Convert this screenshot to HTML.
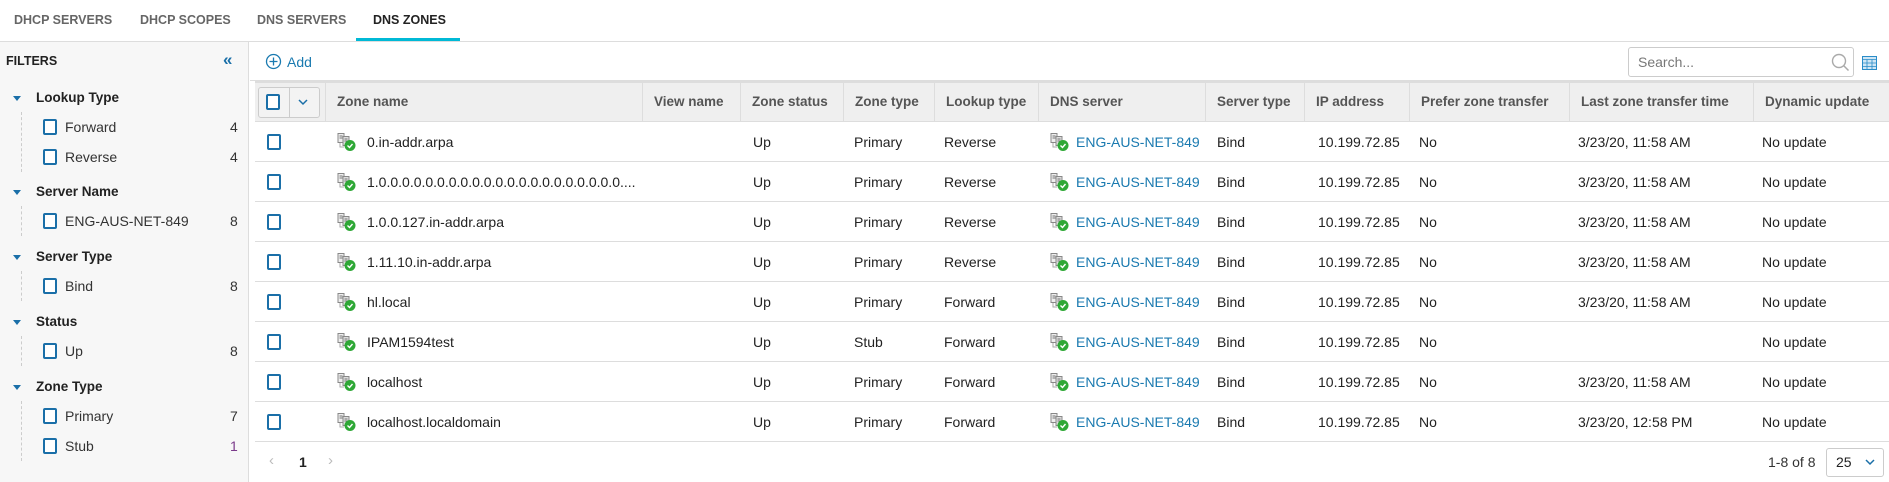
<!DOCTYPE html>
<html><head><meta charset="utf-8"><style>
*{box-sizing:border-box;margin:0;padding:0}
body{width:1889px;height:482px;overflow:hidden;background:#fff;font-family:"Liberation Sans",sans-serif;font-size:14px;color:#222;position:relative}
.abs{position:absolute}
.tabs{left:0;top:0;width:1889px;height:42px;border-bottom:1px solid #ddd}
.tab{position:absolute;top:13px;font-size:12.5px;font-weight:bold;color:#666}
.side{left:0;top:42px;width:249px;height:440px;background:#f7f7f7;border-right:1px solid #ddd}
.cb{position:absolute;width:14px;height:16px;border:2px solid #1a6fa8;border-radius:2px;background:#fff}
.grp{position:absolute;left:36px;font-weight:bold;font-size:13.5px;color:#222}
.tri{position:absolute;left:13px;width:0;height:0;border-left:4px solid transparent;border-right:4px solid transparent;border-top:5px solid #1a6fa8}
.item{position:absolute;color:#333}
.cnt{position:absolute;color:#333}
.vline{position:absolute;left:21px;border-left:1px dashed #ccc}
.hdr{left:255px;top:81px;width:1634px;height:41px;background:#efefef;border-top:2px solid #ddd;border-bottom:1px solid #ddd}
.th{position:absolute;top:0;height:39px;line-height:38px;padding-left:11px;font-weight:bold;color:#555;border-left:1px solid #ddd;white-space:nowrap;font-size:13.5px}
.row{position:absolute;left:255px;width:1634px;height:40px;border-bottom:1px solid #ddd}
.td{position:absolute;top:0;line-height:40px;white-space:nowrap;color:#222}
.lnk{color:#1a7ab0}
.ico{position:absolute;top:11px}
</style></head><body>
<div class="abs tabs">
<span class="tab" style="left:14px">DHCP SERVERS</span>
<span class="tab" style="left:140px">DHCP SCOPES</span>
<span class="tab" style="left:257px">DNS SERVERS</span>
<span class="tab" style="left:373px;color:#222">DNS ZONES</span>
<div class="abs" style="left:356px;top:38px;width:104px;height:3px;background:#00b9d6"></div>
</div>
<div class="abs side">
<div class="abs" style="left:6px;top:12px;font-weight:bold;font-size:12.5px">FILTERS</div>
<div class="abs" style="left:223px;top:8px;color:#1a6fa8;font-size:17px;font-weight:bold">«</div>
</div>
<div id="filters"></div>
<div class="abs" style="left:250px;top:80px;width:1639px;height:1px;background:#ddd"></div>
<svg class="abs" style="left:265px;top:53px" width="17" height="17"><circle cx="8.5" cy="8.5" r="7" fill="none" stroke="#1a7ab0" stroke-width="1.3"/><path d="M8.5 4.5v8M4.5 8.5h8" stroke="#1a7ab0" stroke-width="1.3"/></svg>
<div class="abs" style="left:287px;top:54px;color:#1a7ab0;font-size:14px">Add</div>
<div class="abs" style="left:1628px;top:47px;width:226px;height:30px;border:1px solid #ccc;border-radius:3px"></div>
<div class="abs" style="left:1638px;top:54px;color:#777">Search...</div>
<svg class="abs" style="left:1831px;top:53px" width="19" height="19"><circle cx="8" cy="8" r="6.5" fill="none" stroke="#aaa" stroke-width="1.4"/><path d="M12.5 12.5l5 5" stroke="#aaa" stroke-width="1.5"/></svg>
<svg class="abs" style="left:1862px;top:56px" width="15" height="14"><rect x="0.5" y="0.5" width="14" height="13" fill="#cfe6f5" stroke="#2a8cc8"/><path d="M0.5 3.5h14M5 3.5v10M10 3.5v10M0.5 7h14M0.5 10.5h14" stroke="#2a8cc8" stroke-width="0.8"/></svg>
<div class="abs hdr">
<div class="abs" style="left:3px;top:4px;width:62px;height:31px;border:1px solid #ccc;border-radius:3px;background:#f3f3f3"></div>
<div class="cb" style="left:11px;top:11px"></div>
<div class="abs" style="left:34px;top:5px;width:1px;height:29px;background:#ccc"></div>
<svg class="abs" style="left:43px;top:16px" width="10" height="7"><path d="M1 1l4 4 4-4" fill="none" stroke="#1a6fa8" stroke-width="1.5"/></svg>
<div class="th" style="left:70px">Zone name</div>
<div class="th" style="left:387px">View name</div>
<div class="th" style="left:485px">Zone status</div>
<div class="th" style="left:588px">Zone type</div>
<div class="th" style="left:679px">Lookup type</div>
<div class="th" style="left:783px">DNS server</div>
<div class="th" style="left:950px">Server type</div>
<div class="th" style="left:1049px">IP address</div>
<div class="th" style="left:1154px">Prefer zone transfer</div>
<div class="th" style="left:1314px">Last zone transfer time</div>
<div class="th" style="left:1498px">Dynamic update</div>
</div>
<div id="rows"></div>
<div class="abs" style="left:269px;top:452px;color:#bbb;font-size:15px">‹</div>
<div class="abs" style="left:299px;top:454px;font-weight:bold;color:#222">1</div>
<div class="abs" style="left:328px;top:452px;color:#bbb;font-size:15px">›</div>
<div class="abs" style="left:1768px;top:454px;color:#333">1-8 of 8</div>
<div class="abs" style="left:1826px;top:448px;width:58px;height:29px;border:1px solid #ccc;border-radius:3px"></div>
<div class="abs" style="left:1836px;top:454px;color:#222">25</div>
<svg class="abs" style="left:1865px;top:459px" width="10" height="7"><path d="M1 1l4 4 4-4" fill="none" stroke="#1a6fa8" stroke-width="1.5"/></svg>
<script>
var f=[["Lookup Type",98,[["Forward",4],["Reverse",4]]],["Server Name",192,[["ENG-AUS-NET-849",8]]],["Server Type",257,[["Bind",8]]],["Status",322,[["Up",8]]],["Zone Type",387,[["Primary",7],["Stub",1]]]];
var h="";
f.forEach(function(g){h+='<div class="tri" style="top:'+(g[1]-2)+'px"></div><div class="grp" style="top:'+(g[1]-8)+'px">'+g[0]+'</div>';
h+='<div class="vline" style="top:'+(g[1]+14)+'px;height:'+(g[2].length*30)+'px"></div>';
g[2].forEach(function(it,i){var y=g[1]+29+i*30;h+='<div class="cb" style="left:43px;top:'+(y-8)+'px"></div><div class="item" style="left:65px;top:'+(y-8)+'px">'+it[0]+'</div><div class="cnt" style="left:230px;top:'+(y-8)+'px;'+(it[1]==1?'color:#7a3a8a':'')+'">'+it[1]+'</div>';});});
document.getElementById("filters").innerHTML=h;
var icon='<svg width="22" height="20"><rect x="1" y="0.5" width="6" height="9" fill="#eee" stroke="#888"/><rect x="6" y="3.5" width="6" height="9" fill="#ddd" stroke="#888"/><path d="M2.5 3h3M2.5 5h3M7.5 6h3M7.5 8h3" stroke="#777"/><path d="M3 10v4h4" fill="none" stroke="#aaa"/><circle cx="13" cy="12.5" r="5.5" fill="#2ea836"/><path d="M10.5 12.5l2 2 3-3.5" fill="none" stroke="#fff" stroke-width="1.4"/></svg>';
var r=[["0.in-addr.arpa","Primary","Reverse","11:58 AM"],["1.0.0.0.0.0.0.0.0.0.0.0.0.0.0.0.0.0.0.0.0.0....","Primary","Reverse","11:58 AM"],["1.0.0.127.in-addr.arpa","Primary","Reverse","11:58 AM"],["1.11.10.in-addr.arpa","Primary","Reverse","11:58 AM"],["hl.local","Primary","Forward","11:58 AM"],["IPAM1594test","Stub","Forward",""],["localhost","Primary","Forward","11:58 AM"],["localhost.localdomain","Primary","Forward","12:58 PM"]];
h="";
r.forEach(function(d,i){var t=122+i*40;
h+='<div class="row" style="top:'+t+'px"><div class="cb" style="left:12px;top:12px"></div>';
h+='<div class="ico" style="left:82px">'+icon+'</div><div class="td" style="left:112px">'+d[0]+'</div>';
h+='<div class="td" style="left:498px">Up</div><div class="td" style="left:599px">'+d[1]+'</div><div class="td" style="left:689px">'+d[2]+'</div>';
h+='<div class="ico" style="left:795px">'+icon+'</div><div class="td lnk" style="left:821px">ENG-AUS-NET-849</div>';
h+='<div class="td" style="left:962px">Bind</div><div class="td" style="left:1063px">10.199.72.85</div><div class="td" style="left:1164px">No</div>';
h+='<div class="td" style="left:1323px">'+(d[3]?'3/23/20, '+d[3]:'')+'</div><div class="td" style="left:1507px">No update</div></div>';});
document.getElementById("rows").innerHTML=h;
</script>
</body></html>
